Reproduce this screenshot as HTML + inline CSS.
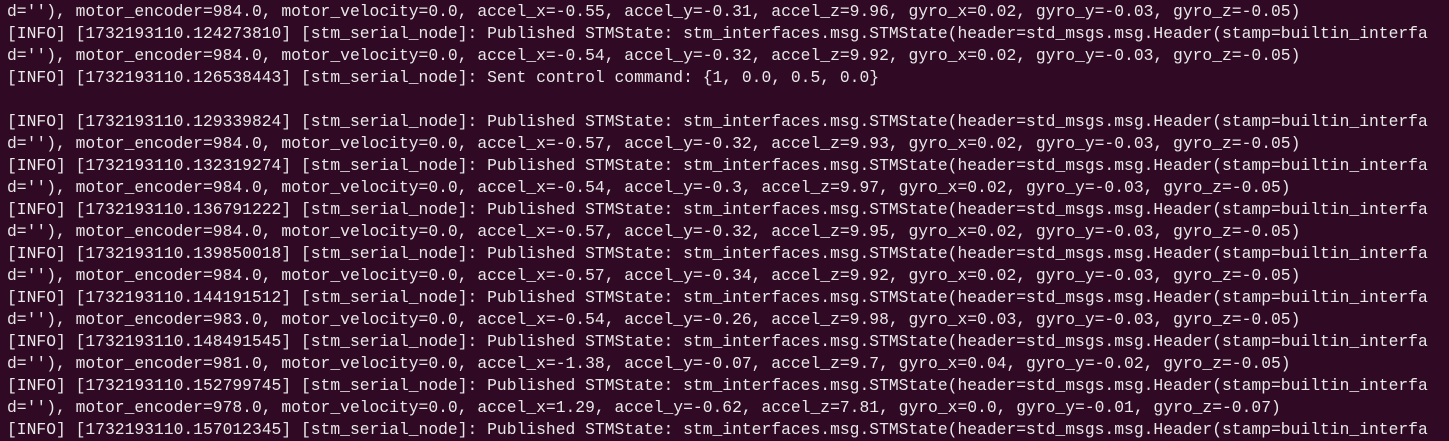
<!DOCTYPE html>
<html><head><meta charset="utf-8"><style>
html,body{margin:0;padding:0;background:#300a24;width:1449px;height:423px;overflow:hidden}
pre{margin:0;position:absolute;left:7px;top:1px;font-family:"Liberation Mono",monospace;font-size:16.33px;line-height:22px;color:#e8e8e8;white-space:pre}
</style></head><body><pre>d=''), motor_encoder=984.0, motor_velocity=0.0, accel_x=-0.55, accel_y=-0.31, accel_z=9.96, gyro_x=0.02, gyro_y=-0.03, gyro_z=-0.05)
[INFO] [1732193110.124273810] [stm_serial_node]: Published STMState: stm_interfaces.msg.STMState(header=std_msgs.msg.Header(stamp=builtin_interfa
d=''), motor_encoder=984.0, motor_velocity=0.0, accel_x=-0.54, accel_y=-0.32, accel_z=9.92, gyro_x=0.02, gyro_y=-0.03, gyro_z=-0.05)
[INFO] [1732193110.126538443] [stm_serial_node]: Sent control command: {1, 0.0, 0.5, 0.0}

[INFO] [1732193110.129339824] [stm_serial_node]: Published STMState: stm_interfaces.msg.STMState(header=std_msgs.msg.Header(stamp=builtin_interfa
d=''), motor_encoder=984.0, motor_velocity=0.0, accel_x=-0.57, accel_y=-0.32, accel_z=9.93, gyro_x=0.02, gyro_y=-0.03, gyro_z=-0.05)
[INFO] [1732193110.132319274] [stm_serial_node]: Published STMState: stm_interfaces.msg.STMState(header=std_msgs.msg.Header(stamp=builtin_interfa
d=''), motor_encoder=984.0, motor_velocity=0.0, accel_x=-0.54, accel_y=-0.3, accel_z=9.97, gyro_x=0.02, gyro_y=-0.03, gyro_z=-0.05)
[INFO] [1732193110.136791222] [stm_serial_node]: Published STMState: stm_interfaces.msg.STMState(header=std_msgs.msg.Header(stamp=builtin_interfa
d=''), motor_encoder=984.0, motor_velocity=0.0, accel_x=-0.57, accel_y=-0.32, accel_z=9.95, gyro_x=0.02, gyro_y=-0.03, gyro_z=-0.05)
[INFO] [1732193110.139850018] [stm_serial_node]: Published STMState: stm_interfaces.msg.STMState(header=std_msgs.msg.Header(stamp=builtin_interfa
d=''), motor_encoder=984.0, motor_velocity=0.0, accel_x=-0.57, accel_y=-0.34, accel_z=9.92, gyro_x=0.02, gyro_y=-0.03, gyro_z=-0.05)
[INFO] [1732193110.144191512] [stm_serial_node]: Published STMState: stm_interfaces.msg.STMState(header=std_msgs.msg.Header(stamp=builtin_interfa
d=''), motor_encoder=983.0, motor_velocity=0.0, accel_x=-0.54, accel_y=-0.26, accel_z=9.98, gyro_x=0.03, gyro_y=-0.03, gyro_z=-0.05)
[INFO] [1732193110.148491545] [stm_serial_node]: Published STMState: stm_interfaces.msg.STMState(header=std_msgs.msg.Header(stamp=builtin_interfa
d=''), motor_encoder=981.0, motor_velocity=0.0, accel_x=-1.38, accel_y=-0.07, accel_z=9.7, gyro_x=0.04, gyro_y=-0.02, gyro_z=-0.05)
[INFO] [1732193110.152799745] [stm_serial_node]: Published STMState: stm_interfaces.msg.STMState(header=std_msgs.msg.Header(stamp=builtin_interfa
d=''), motor_encoder=978.0, motor_velocity=0.0, accel_x=1.29, accel_y=-0.62, accel_z=7.81, gyro_x=0.0, gyro_y=-0.01, gyro_z=-0.07)
[INFO] [1732193110.157012345] [stm_serial_node]: Published STMState: stm_interfaces.msg.STMState(header=std_msgs.msg.Header(stamp=builtin_interfa</pre></body></html>
